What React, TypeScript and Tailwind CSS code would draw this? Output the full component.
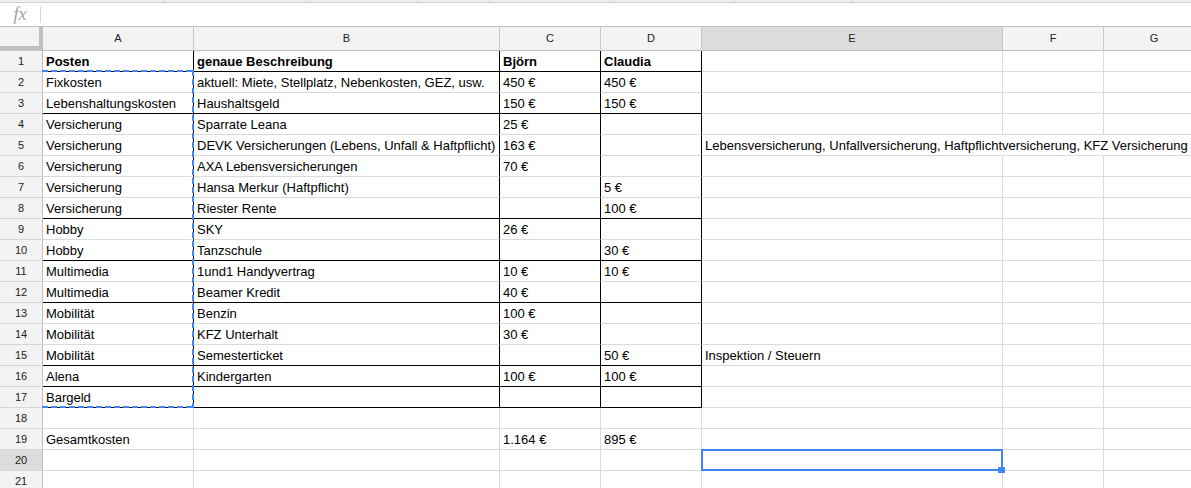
import React from "react";

const rows: string[][] = [
  ["Posten", "genaue Beschreibung", "Björn", "Claudia", "", "", ""],
  ["Fixkosten", "aktuell: Miete, Stellplatz, Nebenkosten, GEZ, usw.", "450 €", "450 €", "", "", ""],
  ["Lebenshaltungskosten", "Haushaltsgeld", "150 €", "150 €", "", "", ""],
  ["Versicherung", "Sparrate Leana", "25 €", "", "", "", ""],
  ["Versicherung", "DEVK Versicherungen (Lebens, Unfall & Haftpflicht)", "163 €", "", "Lebensversicherung, Unfallversicherung, Haftpflichtversicherung, KFZ Versicherung", "", ""],
  ["Versicherung", "AXA Lebensversicherungen", "70 €", "", "", "", ""],
  ["Versicherung", "Hansa Merkur (Haftpflicht)", "", "5 €", "", "", ""],
  ["Versicherung", "Riester Rente", "", "100 €", "", "", ""],
  ["Hobby", "SKY", "26 €", "", "", "", ""],
  ["Hobby", "Tanzschule", "", "30 €", "", "", ""],
  ["Multimedia", "1und1 Handyvertrag", "10 €", "10 €", "", "", ""],
  ["Multimedia", "Beamer Kredit", "40 €", "", "", "", ""],
  ["Mobilität", "Benzin", "100 €", "", "", "", ""],
  ["Mobilität", "KFZ Unterhalt", "30 €", "", "", "", ""],
  ["Mobilität", "Semesterticket", "", "50 €", "Inspektion / Steuern", "", ""],
  ["Alena", "Kindergarten", "100 €", "100 €", "", "", ""],
  ["Bargeld", "", "", "", "", "", ""],
  ["", "", "", "", "", "", ""],
  ["Gesamtkosten", "", "1.164 €", "895 €", "", "", ""],
  ["", "", "", "", "", "", ""],
  ["", "", "", "", "", "", ""],
];

const widths = ["w-[151px]", "w-[306px]", "w-[101px]", "w-[101px]", "w-[301px]", "w-[101px]", "w-[101px]"];
const letters = ["A", "B", "C", "D", "E", "F", "G"];
const blackBottom = new Set([1, 3, 8, 10, 12, 15, 16, 17]);

function Cell({ r, c, text }: { r: number; c: number; text: string }) {
  const inTable = r <= 17 && c <= 3;
  const rightCls = inTable
    ? "border-r-black"
    : r === 5 && (c === 4 || c === 5)
    ? "border-r-transparent"
    : "border-r-[#dadada]";
  const bottomCls = inTable && blackBottom.has(r) ? "border-b-black" : "border-b-[#dadada]";
  return (
    <div
      className={`relative shrink-0 h-[21px] border-r border-b ${rightCls} ${bottomCls} ${widths[c]} flex items-center pl-[3px] pt-[2px] whitespace-nowrap text-[13px] leading-[18px] text-black ${r === 1 ? "font-bold" : ""}`}
    >
      {text && <span className="relative z-10">{text}</span>}
      {r === 2 && c === 0 && (
        <svg className="absolute left-[-1px] top-[-2px] z-20 pointer-events-none" width="153" height="338">
          <line x1="0" y1="1" x2="152" y2="1" stroke="#4285f4" strokeWidth="2" strokeDasharray="6 3" />
          <line x1="151" y1="0" x2="151" y2="338" stroke="#4285f4" strokeWidth="2" strokeDasharray="6 3" />
          <line x1="0" y1="337" x2="152" y2="337" stroke="#4285f4" strokeWidth="2" strokeDasharray="6 3" />
        </svg>
      )}
      {r === 20 && c === 4 && (
        <div className="absolute left-[-1px] top-[-1px] w-[302px] h-[22px] border-2 border-[#4285f4] z-20">
          <div className="absolute left-[295px] top-[16px] w-[7px] h-[6px] bg-[#4285f4]" />
        </div>
      )}
    </div>
  );
}

export default function App() {
  return (
    <div className="w-[1191px] h-[488px] overflow-hidden bg-white font-['Liberation_Sans',Arial,sans-serif]">
      {/* top strip */}
      <div className="flex h-[3px] bg-[#efefef] border-b border-[#d0d0d0]">
        <div className="w-[164px] border-r border-[#d6d6d6]" />
        <div className="w-[146px] border-r border-[#d6d6d6]" />
        <div className="w-[108px] border-r border-[#d6d6d6]" />
        <div className="w-[72px] border-r border-[#d6d6d6]" />
        <div className="w-[124px] border-r border-[#d6d6d6]" />
        <div className="w-[121px] border-r border-[#d6d6d6]" />
        <div className="w-[118px] border-r border-[#d6d6d6]" />
        <div className="flex-1" />
      </div>
      {/* formula bar */}
      <div className="flex items-center h-[24px] border-b border-[#c0c0c0] bg-white">
        <div className="w-[40px] flex justify-center">
          <span className="font-['Liberation_Serif',serif] italic text-[18px] leading-[20px] text-[#a3a3a3] -mt-[1px]">fx</span>
        </div>
        <div className="h-[16px] border-l border-[#d4d4d4]" />
      </div>
      {/* column header */}
      <div className="flex h-[24px]">
        <div className="shrink-0 w-[43px] h-[24px] bg-[#f3f3f3] border-r-[4px] border-b-[5px] border-[#c0c0c0]" />
        {letters.map((l, i) => (
          <div
            key={l}
            className={`shrink-0 ${widths[i]} h-[24px] border-r border-b border-r-[#c8c8c8] border-b-[#c0c0c0] ${i === 4 ? "bg-[#dcdcdc]" : "bg-[#f3f3f3]"} flex items-center justify-center text-[11px] text-[#222]`}
          >
            {l}
          </div>
        ))}
      </div>
      {rows.map((row, ri) => {
        const r = ri + 1;
        return (
          <div key={r} className="flex">
            <div
              className={`shrink-0 w-[43px] h-[21px] border-r border-b border-r-[#c0c0c0] border-b-[#d6d6d6] ${r === 20 ? "bg-[#dcdcdc]" : "bg-[#f3f3f3]"} flex items-center justify-center text-[11px] text-[#222]`}
            >
              {r}
            </div>
            {row.map((t, c) => (
              <Cell key={c} r={r} c={c} text={t} />
            ))}
          </div>
        );
      })}
    </div>
  );
}
